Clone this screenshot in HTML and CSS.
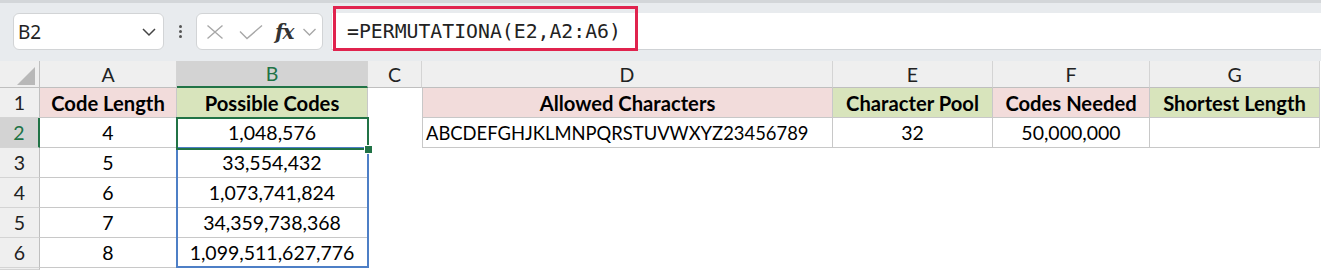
FILE: index.html
```html
<!DOCTYPE html>
<html>
<head>
<meta charset="utf-8">
<link rel="stylesheet" href="styles.css">
</head>
<body>
<div class="app">
  <div class="toolbar">
    <div class="namebox">
      <span class="name">B2</span>
      <svg class="chev" width="16" height="10" viewBox="0 0 16 10"><path d="M2 2 L8 8 L14 2" fill="none" stroke="#444" stroke-width="1.5"/></svg>
    </div>
    <div class="dots"><span></span><span></span><span></span></div>
    <div class="fxbox">
      <svg class="ico-x" width="18" height="16" viewBox="0 0 18 16"><path d="M1.5 1.5 L16.5 14.5 M16.5 1.5 L1.5 14.5" fill="none" stroke="#a8a8a8" stroke-width="1.4"/></svg>
      <svg class="ico-c" width="24" height="16" viewBox="0 0 24 16"><path d="M1 7.5 L8 14.5 L23 1.5" fill="none" stroke="#a8a8a8" stroke-width="1.4"/></svg>
      <span class="fx">fx</span>
      <svg class="chev2" width="15" height="10" viewBox="0 0 15 10"><path d="M1.5 2 L7.5 8 L13.5 2" fill="none" stroke="#a8a8a8" stroke-width="1.4"/></svg>
    </div>
    <div class="formula">
      <span class="ftext">=PERMUTATIONA(E2,A2:A6)</span>
      <div class="highlight"></div>
    </div>
  </div>
  <div class="sheet">
    <div class="grid">
      <div class="corner"><svg width="40" height="27" viewBox="0 0 40 27"><polygon points="35,6 35,24 17,24" fill="#b8b8b8"/></svg></div>
      <div class="ch">A</div>
      <div class="ch sel">B</div>
      <div class="ch">C</div>
      <div class="ch">D</div>
      <div class="ch">E</div>
      <div class="ch">F</div>
      <div class="ch">G</div>

      <div class="rh">1</div>
      <div class="c b pink hd">Code Length</div>
      <div class="c b green hd">Possible Codes</div>
      <div class="c"></div>
      <div class="c b bl pink hd">Allowed Characters</div>
      <div class="c b green hd">Character Pool</div>
      <div class="c b pink hd">Codes Needed</div>
      <div class="c b green hd">Shortest Length</div>

      <div class="rh sel">2</div>
      <div class="c b">4</div>
      <div class="c b">1,048,576</div>
      <div class="c"></div>
      <div class="c b bl left">ABCDEFGHJKLMNPQRSTUVWXYZ23456789</div>
      <div class="c b">32</div>
      <div class="c b">50,000,000</div>
      <div class="c b"></div>

      <div class="rh">3</div>
      <div class="c b">5</div>
      <div class="c b">33,554,432</div>
      <div class="c"></div><div class="c"></div><div class="c"></div><div class="c"></div><div class="c"></div>

      <div class="rh">4</div>
      <div class="c b">6</div>
      <div class="c b">1,073,741,824</div>
      <div class="c"></div><div class="c"></div><div class="c"></div><div class="c"></div><div class="c"></div>

      <div class="rh">5</div>
      <div class="c b">7</div>
      <div class="c b">34,359,738,368</div>
      <div class="c"></div><div class="c"></div><div class="c"></div><div class="c"></div><div class="c"></div>

      <div class="rh">6</div>
      <div class="c b">8</div>
      <div class="c b">1,099,511,627,776</div>
      <div class="c"></div><div class="c"></div><div class="c"></div><div class="c"></div><div class="c"></div>

      <div class="rh"></div>
      <div class="c"></div><div class="c"></div><div class="c"></div><div class="c"></div><div class="c"></div><div class="c"></div><div class="c"></div>
    </div>
    <div class="range"></div>
    <div class="active"></div>
    <div class="handle"></div>
  </div>
</div>
</body>
</html>
```
FILE: styles.css
```css
* { box-sizing: border-box; }
html, body { margin: 0; padding: 0; background: #ffffff; }
body { width: 1321px; height: 270px; overflow: hidden; font-family: Lato, "Noto Sans", sans-serif; }

.app { width: 1321px; height: 270px; overflow: hidden; }

.toolbar {
  height: 61px;
  background: #e8ebee;
  border-top: 3px solid #d3d6d9;
  display: flex;
  align-items: flex-start;
  padding-top: 10px;
  padding-left: 13px;
  position: relative;
}

.namebox {
  width: 151px;
  height: 37px;
  background: #ffffff;
  border: 1px solid #d2d4d6;
  border-radius: 6px;
  display: flex;
  align-items: center;
  padding-left: 4px;
  padding-right: 6px;
}
.name { font-family: "Noto Sans", sans-serif; font-size: 19px; color: #222; flex: 1; }

.dots {
  width: 32px;
  height: 37px;
  display: flex;
  flex-direction: column;
  align-items: center;
  justify-content: center;
  gap: 2px;
}
.dots span { width: 3px; height: 3px; border-radius: 50%; background: #555; display: block; }

.fxbox {
  width: 127px;
  height: 37px;
  background: #ffffff;
  border: 1px solid #d2d4d6;
  border-radius: 6px;
  display: flex;
  align-items: center;
  padding-left: 9px;
}
.ico-x { display: block; }
.ico-c { display: block; margin-left: 15px; }
.fx { font-family: "DejaVu Serif", "Liberation Serif", serif; font-style: italic; font-weight: bold; font-size: 20px; color: #333; margin-left: 12px; letter-spacing: -1px; line-height: 1; }
.chev2 { display: block; margin-left: 8px; }

.formula {
  flex: 1;
  height: 37px;
  margin-left: 8px;
  background: #ffffff;
  border-bottom: 1px solid #cfd2d5;
  border-left: 1px solid #e0e2e4;
  position: relative;
  display: flex;
  align-items: center;
  padding-left: 15px;
}
.ftext { font-family: "DejaVu Sans Mono", monospace; font-size: 19.8px; color: #222; }
.highlight {
  position: absolute;
  left: 1px;
  top: -7px;
  width: 305px;
  height: 45px;
  border: 3px solid #e0234e;
}

.sheet { position: relative; }

.grid {
  display: grid;
  grid-template-columns: 40px 137px 191px 54px 411px 160px 157px 170px;
  grid-template-rows: 27px 30px 30px 30px 30px 30px 30px 2px;
  font-size: 19.5px;
  color: #000;
}

.corner { background: #efefef; border-right: 1px solid #bfbfbf; border-bottom: 1px solid #bfbfbf; }
.corner svg { display: block; }

.ch {
  background: #efefef;
  border-right: 1px solid #d4d4d4;
  border-bottom: 1px solid #bfbfbf;
  display: flex; align-items: center; justify-content: center;
  color: #222;
  font-size: 19.5px;
}
.ch.sel { background: #d3d3d3; color: #217346; border-bottom: 2px solid #217346; }

.rh {
  background: #efefef;
  border-right: 1px solid #bfbfbf;
  border-bottom: 1px solid #d4d4d4;
  display: flex; align-items: center; justify-content: center;
  color: #222;
}
.rh.sel { background: #d3d3d3; color: #217346; border-right: 2px solid #217346; }

.c { display: flex; align-items: center; justify-content: center; white-space: nowrap; }
.c.b { border-right: 1px solid #c8c8c8; border-bottom: 1px solid #c8c8c8; }
.c.bl { border-left: 1px solid #c8c8c8; }
.c.left { justify-content: flex-start; padding-left: 3px; font-size: 18.4px; }
.hd { font-weight: bold; font-size: 20.2px; }
.pink { background: #f2dcdb; }
.green { background: #d8e4bc; }

.range {
  position: absolute;
  left: 176px;
  top: 86px;
  width: 193px;
  height: 121px;
  border: 2px solid #4e7fc6;
}
.active {
  position: absolute;
  left: 176px;
  top: 56px;
  width: 193px;
  height: 33px;
  border: 2px solid #217346;
}
.handle {
  position: absolute;
  left: 365px;
  top: 85px;
  width: 7px;
  height: 7px;
  background: #217346;
  outline: 1px solid #ffffff;
}
```
